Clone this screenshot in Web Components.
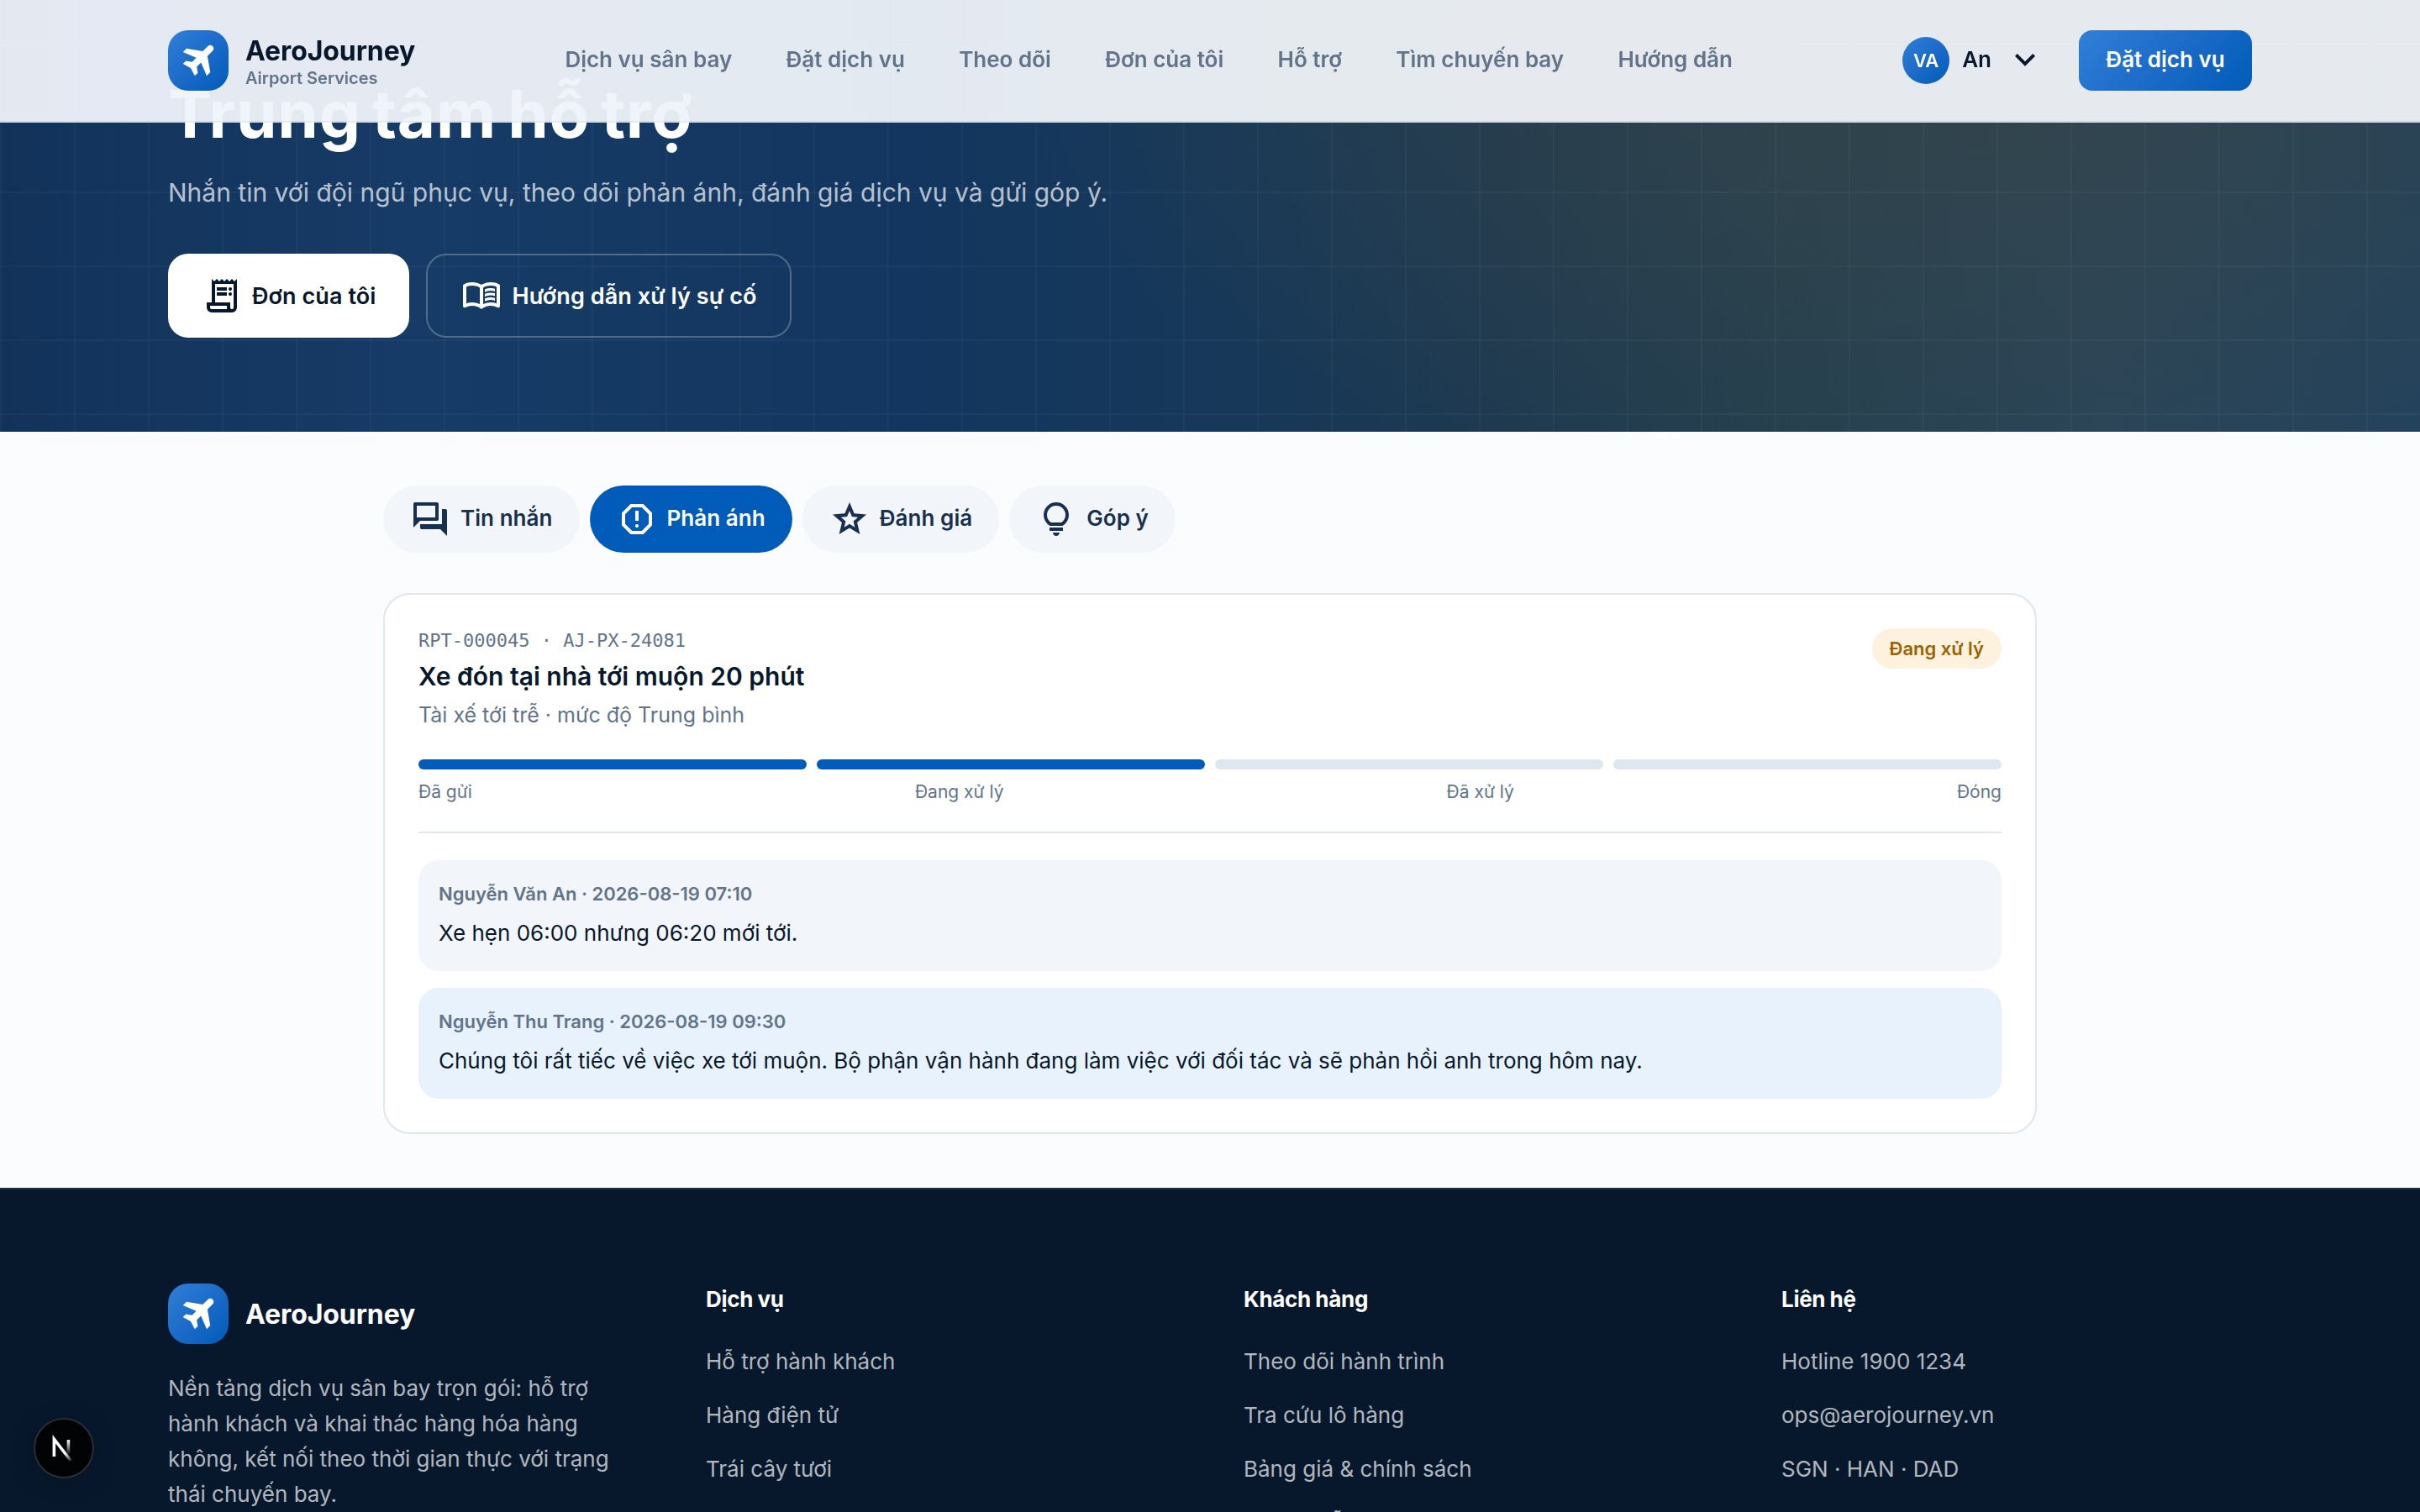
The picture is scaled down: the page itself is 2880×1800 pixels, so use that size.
<!DOCTYPE html>
<html lang="vi">
<head>
<meta charset="utf-8">
<title>AeroJourney - Trung tâm hỗ trợ</title>
<style>
    :root {
        --navy: #07182d;
        --ink: #17304f;
        --muted: #617489;
        --primary: #005cb8;
        --brand: linear-gradient(135deg, #2f80d8 0%, #1c6bc8 50%, #005cb8 100%);
        --line: #dfe7ee;
        --surface: #f2f5fa;
    }

    html, body {
        margin: 0;
        height: 1800px;
        overflow: hidden;
    }

    body {
        background: #fbfcfe;
        color: var(--navy);
        font-family: Inter, "Liberation Sans", sans-serif;
        font-size: 26px;
    }
</style>
</head>
<body>
<aj-header></aj-header>

<aj-hero>
    <span slot="title">Trung tâm hỗ trợ</span>
    <span slot="lead">Nhắn tin với đội ngũ phục vụ, theo dõi phản ánh, đánh giá dịch vụ và gửi góp ý.</span>
    <aj-button icon="receipt">Đơn của tôi</aj-button>
    <aj-button icon="book" ghost>Hướng dẫn xử lý sự cố</aj-button>
</aj-hero>

<aj-content>
    <aj-tab slot="tabs" icon="forum">Tin nhắn</aj-tab>
    <aj-tab slot="tabs" icon="report" active>Phản ánh</aj-tab>
    <aj-tab slot="tabs" icon="star">Đánh giá</aj-tab>
    <aj-tab slot="tabs" icon="bulb">Góp ý</aj-tab>

    <aj-report step="2">
        <span slot="code">RPT-000045 · AJ-PX-24081</span>
        <span slot="title">Xe đón tại nhà tới muộn 20 phút</span>
        <span slot="info">Tài xế tới trễ · mức độ Trung bình</span>
        <span slot="status">Đang xử lý</span>
        <aj-message>
            <span slot="meta">Nguyễn Văn An · 2026-08-19 07:10</span>
            Xe hẹn 06:00 nhưng 06:20 mới tới.
        </aj-message>
        <aj-message staff>
            <span slot="meta">Nguyễn Thu Trang · 2026-08-19 09:30</span>
            Chúng tôi rất tiếc về việc xe tới muộn. Bộ phận vận hành đang làm việc với đối tác và sẽ phản hồi anh trong hôm nay.
        </aj-message>
    </aj-report>
</aj-content>

<aj-footer></aj-footer>
<aj-dev-badge></aj-dev-badge>

<script>
const ICONS = {
    plane: 'm397-115-99-184-184-99 71-70 145 25 102-102-317-135 84-86 385 68 124-124q23-23 57-23t57 23q23 23 23 56.5T822-709L697-584l68 384-85 85-136-317-102 102 26 144-71 71Z',
    chevron: 'M480-344 240-584l56-56 184 184 184-184 56 56-240 240Z',
    receipt: 'M240-80q-50 0-85-35t-35-85v-120h120v-560l60 60 60-60 60 60 60-60 60 60 60-60 60 60 60-60 60 60 60-60v680q0 50-35 85t-85 35H240Zm480-80q17 0 28.5-11.5T760-200v-560H320v440h360v120q0 17 11.5 28.5T720-160ZM360-600v-80h240v80H360Zm0 120v-80h240v80H360Zm320-120q-17 0-28.5-11.5T640-640q0-17 11.5-28.5T680-680q17 0 28.5 11.5T720-640q0 17-11.5 28.5T680-600Zm0 120q-17 0-28.5-11.5T640-520q0-17 11.5-28.5T680-560q17 0 28.5 11.5T720-520q0 17-11.5 28.5T680-480ZM240-160h360v-80H200v40q0 17 11.5 28.5T240-160Z',
    book: 'M560-564v-68q33-14 67.5-21t72.5-7q26 0 51 4t49 10v64q-24-9-48.5-13.5T700-600q-38 0-73 9.5T560-564Zm0 220v-68q33-14 67.5-21t72.5-7q26 0 51 4t49 10v64q-24-9-48.5-13.5T700-380q-38 0-73 9t-67 27Zm0-110v-68q33-14 67.5-21t72.5-7q26 0 51 4t49 10v64q-24-9-48.5-13.5T700-490q-38 0-73 9.5T560-454ZM260-320q47 0 91.5 10.5T440-278v-394q-41-24-87-36t-93-12q-36 0-71.5 7T120-692v396q35-12 69.5-18t70.5-6Zm260 42q44-21 88.5-31.5T700-320q36 0 70.5 6t69.5 18v-396q-33-14-68.5-21t-71.5-7q-47 0-93 12t-87 36v394Zm-40 118q-48-38-104-59t-116-21q-42 0-82.5 11T100-198q-21 11-40.5-1T40-234v-482q0-11 5.5-21T62-752q46-24 96-36t102-12q58 0 113.5 15T480-740q51-30 106.5-45T700-800q52 0 102 12t96 36q11 5 16.5 15t5.5 21v482q0 23-19.5 35t-40.5 1q-37-20-77.5-31T700-240q-60 0-116 21t-104 59Z',
    forum: 'M280-240q-17 0-28.5-11.5T240-280v-80h520v-360h80q17 0 28.5 11.5T880-680v600L720-240H280ZM80-280v-560q0-17 11.5-28.5T120-880h520q17 0 28.5 11.5T680-840v360q0 17-11.5 28.5T640-440H240L80-280Zm520-240v-280H160v280h440Z',
    report: 'M480-280q17 0 28.5-11.5T520-320q0-17-11.5-28.5T480-360q-17 0-28.5 11.5T440-320q0 17 11.5 28.5T480-280Zm-40-160h80v-240h-80v240ZM330-120 120-330v-300l210-210h300l210 210v300L630-120H330Zm34-80h232l164-164v-232L596-760H364L200-596v232l164 164Z',
    star: 'm354-287 126-76 126 77-33-144 111-96-146-13-58-136-58 135-146 13 111 97-33 143ZM233-120l65-281L80-590l288-25 112-265 112 265 288 25-218 189 65 281-247-149-247 149Z',
    bulb: 'M480-80q-33 0-56.5-23.5T400-160h160q0 33-23.5 56.5T480-80ZM320-200v-80h320v80H320Zm10-120q-69-41-109.5-110T180-580q0-125 87.5-212.5T480-880q125 0 212.5 87.5T780-580q0 81-40.5 150T630-320H330Zm24-80h252q45-32 69.5-79T700-580q0-92-64-156t-156-64q-92 0-156 64t-64 156q0 54 24.5 101t69.5 79Z'
};

class AjIcon extends HTMLElement {
    connectedCallback() {
        this.attachShadow({ mode: 'open' }).innerHTML = `
        <style>
            :host { display: block; width: 48px; height: 48px; flex: none; }
            svg { display: block; width: 100%; height: 100%; fill: currentColor; }
        </style>
        <svg viewBox="0 -960 960 960"><path d="${ICONS[this.getAttribute('name')]}"/></svg>
        `;
    }
}

class AjLogo extends HTMLElement {
    connectedCallback() {
        const tagline = this.getAttribute('tagline');
        this.attachShadow({ mode: 'open' }).innerHTML = `
        <style>
            :host { display: flex; align-items: center; gap: 20px; }
            .mark {
                display: grid;
                place-items: center;
                width: 72px;
                height: 72px;
                border-radius: 24px;
                background: var(--brand);
                color: #fff;
            }
            .name { padding-top: 1px; font-size: 32px; font-weight: 700; line-height: 38px; letter-spacing: -0.1px; }
            .tagline { font-size: 20px; font-weight: 600; line-height: 26px; color: var(--muted); }
            .withTagline { padding-top: 2px; }
        </style>
        <div class="mark"><aj-icon name="plane"></aj-icon></div>
        <div class="${tagline ? 'withTagline' : ''}">
            <div class="name">AeroJourney</div>
            ${tagline ? `<div class="tagline">${tagline}</div>` : ''}
        </div>
        `;
    }
}

class AjHeader extends HTMLElement {
    connectedCallback() {
        const links = ['Dịch vụ sân bay', 'Đặt dịch vụ', 'Theo dõi', 'Đơn của tôi', 'Hỗ trợ', 'Tìm chuyến bay', 'Hướng dẫn'];
        this.attachShadow({ mode: 'open' }).innerHTML = `
        <style>
            :host {
                position: fixed;
                inset: 0 0 auto 0;
                z-index: 10;
                box-sizing: border-box;
                height: 146px;
                border-bottom: 2px solid rgba(223, 236, 242, .9);
                background: linear-gradient(90deg, rgba(240, 243, 250, .95), rgba(239, 243, 249, .95) 38%, rgba(240, 243, 246, .95) 65%, rgba(240, 243, 246, .95));
                background-clip: padding-box;
            }
            .bar {
                display: flex;
                align-items: center;
                justify-content: space-between;
                width: 2480px;
                height: 144px;
                margin: 0 auto;
            }
            nav { display: flex; gap: 64.3px; margin-right: 24px; padding-bottom: 3px; font-weight: 600; color: var(--muted); }
            .right { display: flex; align-items: center; }
            .avatar {
                display: grid;
                place-items: center;
                width: 56px;
                height: 56px;
                border-radius: 50%;
                background: var(--brand);
                color: #fff;
                font-size: 22px;
                font-weight: 600;
            }
            .user { margin: 0 16px 0 15px; padding-bottom: 3px; font-weight: 600; }
            .cta {
                box-sizing: border-box;
                width: 206px;
                height: 72px;
                margin-left: 40px;
                border-radius: 16px;
                background: var(--brand);
                color: #fff;
                font-weight: 600;
                line-height: 69px;
                text-align: center;
            }
        </style>
        <div class="bar">
            <aj-logo tagline="Airport Services"></aj-logo>
            <nav>${links.map(l => `<span>${l}</span>`).join('')}</nav>
            <div class="right">
                <div class="avatar">VA</div>
                <div class="user">An</div>
                <aj-icon name="chevron"></aj-icon>
                <div class="cta">Đặt dịch vụ</div>
            </div>
        </div>
        `;
    }
}

class AjHero extends HTMLElement {
    connectedCallback() {
        this.attachShadow({ mode: 'open' }).innerHTML = `
        <style>
            :host {
                display: block;
                box-sizing: border-box;
                height: 514px;
                padding-top: 92px;
                color: #fff;
                background:
                    linear-gradient(rgba(255, 255, 255, .035) 2px, transparent 2px) 0 52px / 88px 88px,
                    linear-gradient(90deg, rgba(255, 255, 255, .03) 2px, transparent 2px) 0 0 / 88px 88px,
                    radial-gradient(1200px 520px at 2380px 80px, rgba(54, 69, 74, .75), rgba(54, 69, 74, 0)),
                    linear-gradient(90deg, #12325a 0%, #163b66 17%, #12365f 38%, #173858 52%, #1e3950 62%, #25404f 74%, #2a4559 87%, #22425d 100%);
            }
            .inner { width: 2480px; margin: 0 auto; }
            h1 {
                margin: 0;
                font-size: 78px;
                font-weight: 700;
                line-height: 88px;
                letter-spacing: 0.8px;
                word-spacing: -6px;
            }
            p { margin: 25px 0 49px; font-size: 30px; line-height: 48px; color: rgba(255, 255, 255, .7); }
            .actions { display: flex; gap: 20px; }
        </style>
        <div class="inner">
            <h1><slot name="title"></slot></h1>
            <p><slot name="lead"></slot></p>
            <div class="actions"><slot></slot></div>
        </div>
        `;
    }
}

class AjButton extends HTMLElement {
    connectedCallback() {
        this.attachShadow({ mode: 'open' }).innerHTML = `
        <style>
            :host {
                display: flex;
                align-items: center;
                gap: 12px;
                box-sizing: border-box;
                height: 100px;
                padding: 0 40px;
                border-radius: 24px;
                background: #fff;
                color: var(--navy);
                font-size: 27px;
                font-weight: 600;
                letter-spacing: 0.08px;
            }
            :host([ghost]) {
                border: 2px solid rgba(255, 255, 255, .25);
                background: none;
                color: #fff;
            }
        </style>
        <aj-icon name="${this.getAttribute('icon')}"></aj-icon>
        <slot></slot>
        `;
    }
}

class AjContent extends HTMLElement {
    connectedCallback() {
        this.attachShadow({ mode: 'open' }).innerHTML = `
        <style>
            :host { display: block; width: 1968px; margin: 0 auto; padding: 64px 0; }
            .tabs { display: flex; gap: 12px; margin-bottom: 48px; }
        </style>
        <div class="tabs"><slot name="tabs"></slot></div>
        <slot></slot>
        `;
    }
}

class AjTab extends HTMLElement {
    connectedCallback() {
        this.attachShadow({ mode: 'open' }).innerHTML = `
        <style>
            :host {
                display: flex;
                align-items: center;
                gap: 12px;
                height: 80px;
                padding: 0 32px;
                border-radius: 40px;
                background: var(--surface);
                color: var(--ink);
                font-weight: 600;
                letter-spacing: 0.05px;
            }
            :host([active]) { background: var(--primary); color: #fff; }
            span { padding-bottom: 3px; }
        </style>
        <aj-icon name="${this.getAttribute('icon')}"></aj-icon>
        <span><slot></slot></span>
        `;
    }
}

class AjReport extends HTMLElement {
    connectedCallback() {
        const step = Number(this.getAttribute('step'));
        const steps = ['Đã gửi', 'Đang xử lý', 'Đã xử lý', 'Đóng'];
        this.attachShadow({ mode: 'open' }).innerHTML = `
        <style>
            :host {
                display: block;
                padding: 40px;
                border: 2px solid var(--line);
                border-radius: 32px;
                background: #fff;
            }
            .head { display: flex; justify-content: space-between; align-items: flex-start; }
            .code { font: 22px/29px "DejaVu Sans Mono", monospace; color: var(--muted); }
            .title { margin-top: 6px; font-size: 30px; font-weight: 600; line-height: 44px; }
            .info { margin-top: 6px; font-size: 25px; line-height: 37px; color: var(--muted); }
            .status {
                padding: 0 21px;
                border-radius: 24px;
                background: #fef2df;
                color: #9a6200;
                font-size: 22px;
                font-weight: 600;
                line-height: 48px;
            }
            .progress { display: grid; grid-template-columns: repeat(4, 1fr); gap: 12px; margin-top: 34px; }
            .progress i { height: 12px; border-radius: 6px; background: var(--line); }
            .progress i.done { background: var(--primary); }
            .labels {
                display: flex;
                justify-content: space-between;
                margin-top: 10px;
                font-size: 21px;
                line-height: 33px;
                color: var(--muted);
            }
            .thread {
                display: flex;
                flex-direction: column;
                gap: 20px;
                margin-top: 31px;
                padding-top: 32px;
                border-top: 2px solid var(--line);
            }
        </style>
        <div class="head">
            <div>
                <div class="code"><slot name="code"></slot></div>
                <div class="title"><slot name="title"></slot></div>
                <div class="info"><slot name="info"></slot></div>
            </div>
            <div class="status"><slot name="status"></slot></div>
        </div>
        <div class="progress">${steps.map((s, i) => `<i class="${i < step ? 'done' : ''}"></i>`).join('')}</div>
        <div class="labels">${steps.map(s => `<span>${s}</span>`).join('')}</div>
        <div class="thread"><slot></slot></div>
        `;
    }
}

class AjMessage extends HTMLElement {
    connectedCallback() {
        this.attachShadow({ mode: 'open' }).innerHTML = `
        <style>
            :host {
                display: block;
                padding: 24px;
                border-radius: 24px;
                background: var(--surface);
            }
            :host([staff]) { background: #e7f2fc; }
            .meta { margin-bottom: 8px; font-size: 22px; font-weight: 600; line-height: 33px; color: var(--muted); }
            .text { line-height: 43px; }
        </style>
        <div class="meta"><slot name="meta"></slot></div>
        <div class="text"><slot></slot></div>
        `;
    }
}

class AjFooter extends HTMLElement {
    connectedCallback() {
        const columns = {
            'Dịch vụ': ['Hỗ trợ hành khách', 'Hàng điện tử', 'Trái cây tươi'],
            'Khách hàng': ['Theo dõi hành trình', 'Tra cứu lô hàng', 'Bảng giá &amp; chính sách', 'Hướng dẫn'],
            'Liên hệ': ['Hotline 1900 1234', 'ops@aerojourney.vn', 'SGN · HAN · DAD']
        };
        this.attachShadow({ mode: 'open' }).innerHTML = `
        <style>
            :host {
                display: block;
                height: 384px;
                overflow: hidden;
                border-top: 2px solid #202f42;
                background: var(--navy);
                color: #fff;
            }
            .grid {
                display: grid;
                grid-template-columns: repeat(4, 1fr);
                gap: 80px;
                width: 2480px;
                margin: 0 auto;
                padding-top: 112px;
            }
            p { max-width: 540px; margin: 32px 0 0; line-height: 42px; color: rgba(255, 255, 255, .7); }
            h4 { margin: 1px 0 36px; font-size: 26px; font-weight: 700; line-height: 36px; letter-spacing: -0.3px; word-spacing: -0.5px; }
            ul { display: flex; flex-direction: column; gap: 24px; margin: 0; padding: 0; list-style: none; }
            li { line-height: 40px; color: rgba(255, 255, 255, .7); }
        </style>
        <div class="grid">
            <div>
                <aj-logo></aj-logo>
                <p>Nền tảng dịch vụ sân bay trọn gói: hỗ trợ hành khách và khai thác hàng hóa hàng không, kết nối theo thời gian thực với trạng thái chuyến bay.</p>
            </div>
            ${Object.entries(columns).map(([title, items]) => `
            <div>
                <h4>${title}</h4>
                <ul>${items.map(t => `<li>${t}</li>`).join('')}</ul>
            </div>`).join('')}
        </div>
        `;
    }
}

class AjDevBadge extends HTMLElement {
    connectedCallback() {
        this.attachShadow({ mode: 'open' }).innerHTML = `
        <style>
            :host {
                position: fixed;
                left: 40px;
                bottom: 40px;
                box-sizing: border-box;
                width: 72px;
                height: 72px;
                border: 2px solid #2b2d30;
                border-radius: 50%;
                background: #020305;
                box-shadow: 0 4px 24px rgba(0, 0, 0, .25);
            }
            svg { display: block; margin: -2px; width: 72px; height: 72px; }
        </style>
        <svg viewBox="0 0 40 40" fill="none" stroke-width="2">
            <defs>
                <linearGradient id="diag" gradientUnits="userSpaceOnUse" x1="9.9" y1="9.9" x2="14" y2="16.4">
                    <stop stop-color="#fff"/>
                    <stop offset="1" stop-color="#fff" stop-opacity="0"/>
                </linearGradient>
                <linearGradient id="stem" gradientUnits="userSpaceOnUse" x1="11.8" y1="1.5" x2="11.8" y2="11.5">
                    <stop stop-color="#fff"/>
                    <stop offset="1" stop-color="#fff" stop-opacity="0"/>
                </linearGradient>
            </defs>
            <g transform="translate(11.2 13)">
                <path d="M13.3 15.2 2.34 1v11.6" stroke="url(#diag)"/>
                <path d="M11.825 1.5v11.6" stroke="url(#stem)"/>
            </g>
        </svg>
        `;
    }
}

customElements.define('aj-icon', AjIcon);
customElements.define('aj-logo', AjLogo);
customElements.define('aj-header', AjHeader);
customElements.define('aj-hero', AjHero);
customElements.define('aj-button', AjButton);
customElements.define('aj-content', AjContent);
customElements.define('aj-tab', AjTab);
customElements.define('aj-report', AjReport);
customElements.define('aj-message', AjMessage);
customElements.define('aj-footer', AjFooter);
customElements.define('aj-dev-badge', AjDevBadge);
</script>
</body>
</html>
